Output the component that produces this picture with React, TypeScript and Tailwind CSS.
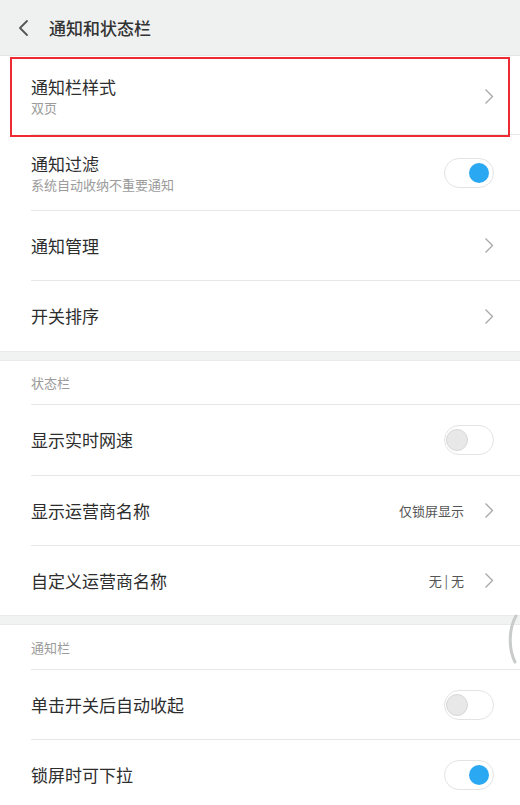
import type { ReactNode } from 'react';

const FONT = '"Noto Sans CJK SC", "Noto Sans", sans-serif';

function Chevron() {
  return (
    <svg width="10" height="17" viewBox="0 0 10 17" className="shrink-0" aria-hidden="true">
      <path d="M1.5 1.5 L8.5 8.5 L1.5 15.5" fill="none" stroke="#a9a9a9" strokeWidth="1.4" strokeLinejoin="round" />
    </svg>
  );
}

function Toggle({ on }: { on: boolean }) {
  return (
    <div className="relative h-[30px] w-[50px] shrink-0 rounded-full border border-[#e2e3e3] bg-white">
      {on ? (
        <span className="absolute right-[4px] top-[4px] h-[20px] w-[20px] rounded-full bg-[#2aa8f2]" />
      ) : (
        <span className="absolute left-[1px] top-[3px] h-[22px] w-[22px] rounded-full border border-[#d6d7d7] bg-[#e7e8e7]" />
      )}
    </div>
  );
}

type RowProps = {
  title: string;
  sub?: string;
  value?: string;
  right?: ReactNode;
  h: string;
  divider?: boolean;
};

function Row({ title, sub, value, right, h, divider = true }: RowProps) {
  return (
    <div className={`ml-[31px] flex items-center pr-[26px] ${h} ${divider ? 'border-b border-[#e6e7e7]' : ''}`}>
      <div className="flex flex-1 flex-col">
        <span className="text-[17px] leading-[24px] text-[#2d2d2d]">{title}</span>
        {sub && <span className="text-[13px] leading-[18px] text-[#9b9b9b]">{sub}</span>}
      </div>
      {value && <span className="mr-[20px] text-[13px] text-[#555]">{value}</span>}
      {right ?? <Chevron />}
    </div>
  );
}

function SectionHeader({ label, h }: { label: string; h: string }) {
  return (
    <div className={`ml-[31px] flex items-center border-b border-[#e6e7e7] pt-[1px] ${h}`}>
      <span className="text-[13px] text-[#9b9b9b]">{label}</span>
    </div>
  );
}

function Band() {
  return <div className="h-[10px] border-y border-[#e9ebea] bg-[#f1f3f2]" />;
}

export default function App() {
  return (
    <div className="relative h-[805px] w-[520px] overflow-hidden bg-white" style={{ fontFamily: FONT }}>
      {/* Header */}
      <div className="flex h-[56px] items-center border-b border-[#e4e5e5] bg-[#eff0f0]">
        <svg width="14" height="18" viewBox="0 0 14 18" className="ml-[16px]" aria-hidden="true">
          <path d="M11 2 L4 9 L11 16" fill="none" stroke="#555" strokeWidth="1.8" strokeLinejoin="round" strokeLinecap="round" />
        </svg>
        <span className="ml-[19px] text-[17px] font-medium text-[#333]">通知和状态栏</span>
      </div>

      {/* First row with red annotation */}
      <div className="relative">
        <Row title="通知栏样式" sub="双页" h="h-[79px] pt-[2px]" />
        <div className="pointer-events-none absolute left-[10px] right-[10px] top-[1px] h-[80px] border-2 border-[#ef2a33]" />
      </div>
      <Row title="通知过滤" sub="系统自动收纳不重要通知" right={<Toggle on />} h="h-[76px]" />
      <Row title="通知管理" h="h-[70px]" />
      <Row title="开关排序" h="h-[70px]" divider={false} />

      <Band />
      <SectionHeader label="状态栏" h="h-[44px]" />
      <Row title="显示实时网速" right={<Toggle on={false} />} h="h-[71px]" />
      <Row title="显示运营商名称" value="仅锁屏显示" h="h-[70px]" />
      <Row title="自定义运营商名称" value="无 | 无" h="h-[69px]" divider={false} />

      <Band />
      <SectionHeader label="通知栏" h="h-[45px]" />
      <Row title="单击开关后自动收起" right={<Toggle on={false} />} h="h-[70px]" />
      <Row title="锁屏时可下拉" right={<Toggle on />} h="h-[70px]" divider={false} />

      {/* overscroll edge glow */}
      <svg width="12" height="50" viewBox="0 0 12 50" className="absolute left-[506px] top-[614px]" aria-hidden="true">
        <path d="M10 2 C3 14 2 34 9 48" fill="none" stroke="#c9cbca" strokeWidth="3" strokeLinecap="round" />
      </svg>
    </div>
  );
}
